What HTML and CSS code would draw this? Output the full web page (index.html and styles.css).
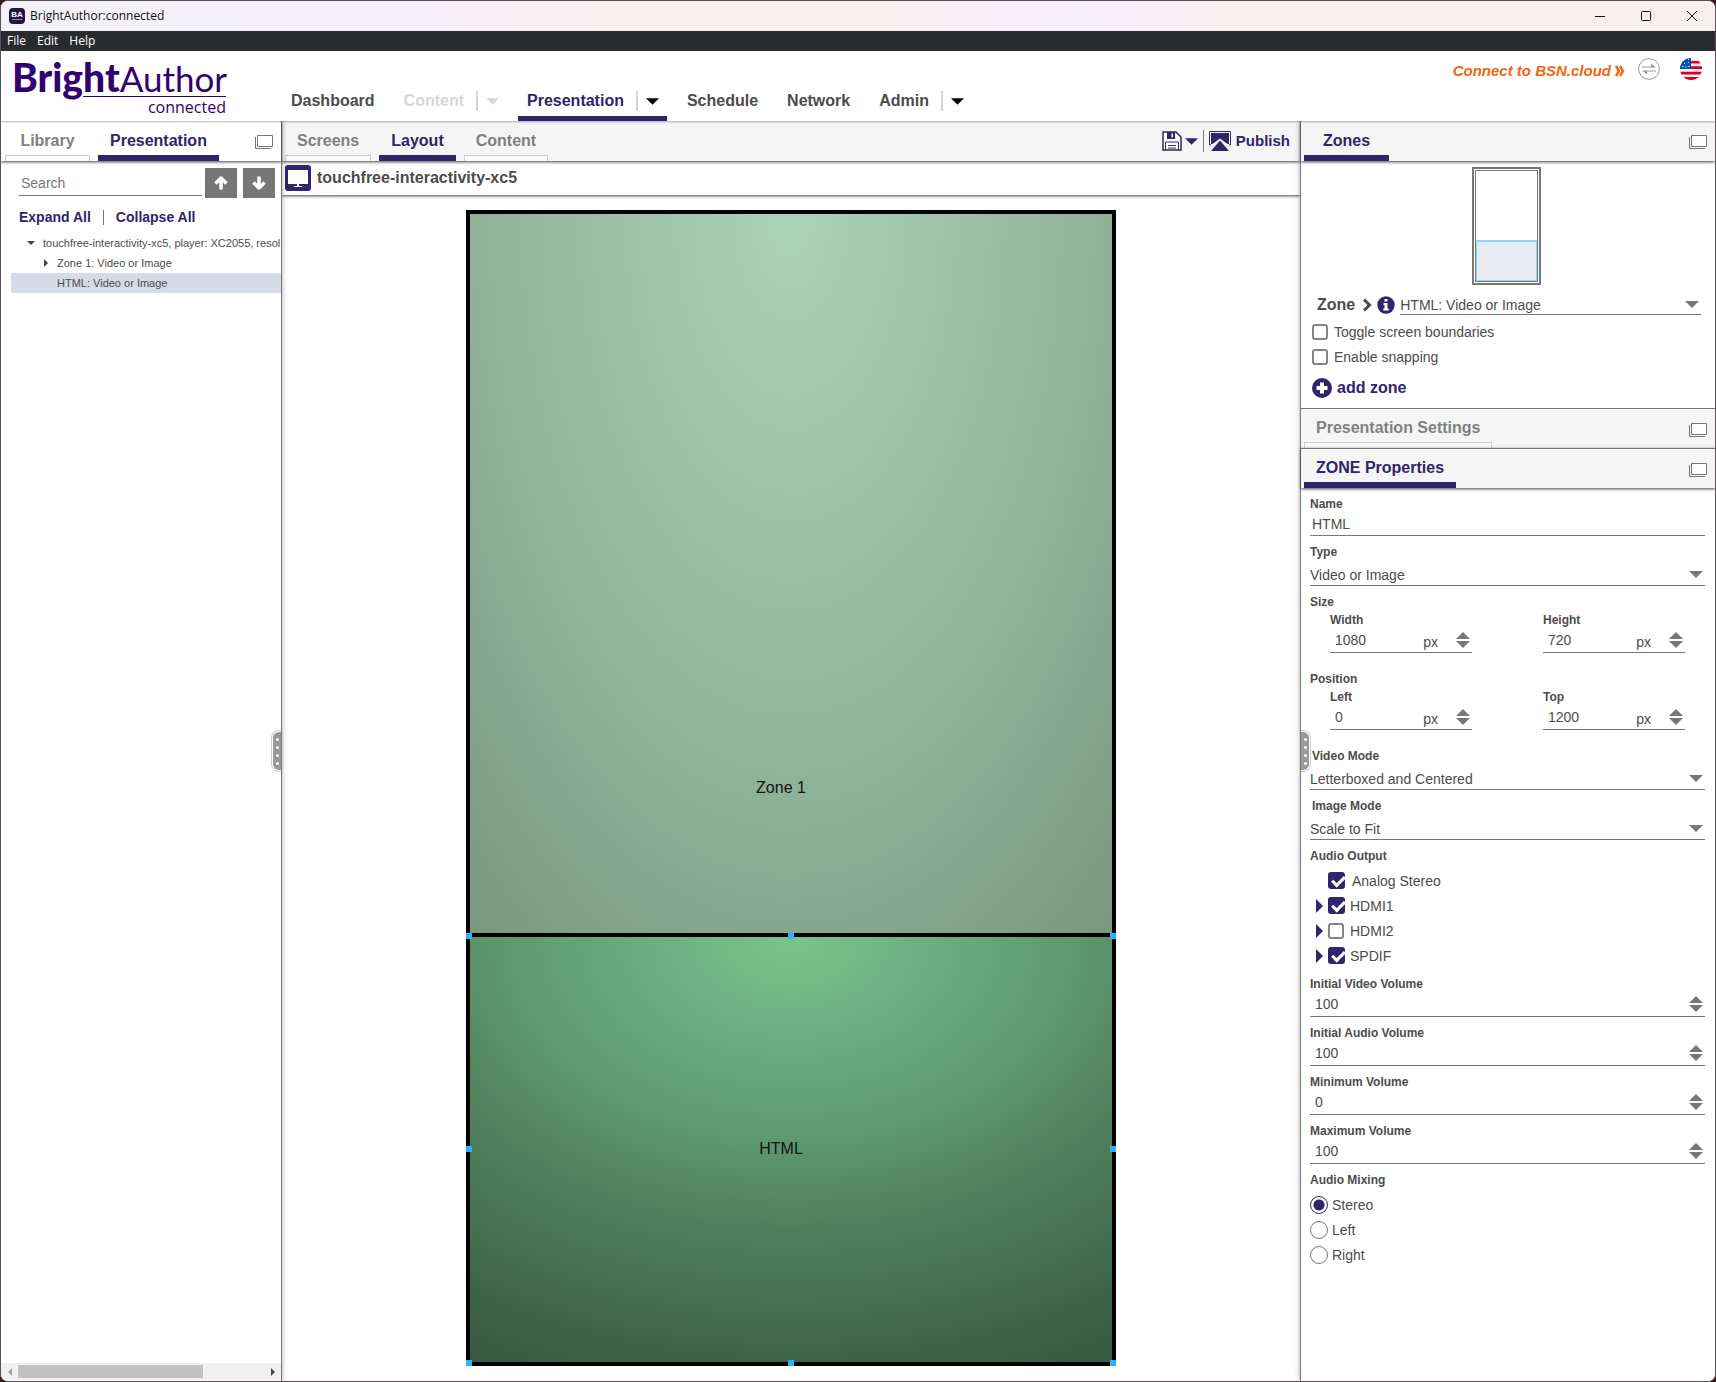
FILE: index.html
```html
<!DOCTYPE html>
<html lang="en">
<head>
<meta charset="utf-8">
<title>BrightAuthor:connected</title>
<link rel="stylesheet" href="styles.css">
</head>
<body>
<svg class="defs" aria-hidden="true">
  <symbol id="i-window" viewBox="0 0 18 14"><path d="M2.5.5h15v11h-15z" fill="#fff" stroke="#777"/><path d="M.5 2v11.500H16" fill="none" stroke="#777"/></symbol>
  <symbol id="i-down" viewBox="0 0 14 7"><path d="M0 0h14L7 7z" fill="currentColor"/></symbol>
  <symbol id="i-up" viewBox="0 0 14 7"><path d="M0 7h14L7 0z" fill="currentColor"/></symbol>
  <symbol id="i-right" viewBox="0 0 7 14"><path d="M0 0v14l7-7z" fill="currentColor"/></symbol>
  <symbol id="i-arrow" viewBox="0 0 16 16"><path d="M8 14.500V4M2.500 8.500 8 3l5.500 5.500" fill="none" stroke="#fff" stroke-width="3.500" stroke-linejoin="round"/></symbol>
</svg>
<div class="window">
  <header class="titlebar">
    <svg class="app-icon" viewBox="0 0 16 16"><rect width="16" height="16" rx="4" fill="#1f1646"/><text x="8" y="9" text-anchor="middle" class="app-icon-text">BA</text><path d="M3 11.500h10" stroke="#8e86b8"/></svg>
    <span class="title">BrightAuthor:connected</span>
    <div class="controls">
      <button aria-label="Minimize"><svg viewBox="0 0 12 12"><path d="M1 6.500h10" stroke="#111"/></svg></button>
      <button aria-label="Maximize"><svg viewBox="0 0 12 12"><rect x="1.500" y="1.500" width="9" height="9" rx="1" fill="none" stroke="#111"/></svg></button>
      <button aria-label="Close"><svg viewBox="0 0 12 12"><path d="M1 1l10 10M11 1 1 11" stroke="#111"/></svg></button>
    </div>
  </header>
  <nav class="menubar"><a href="#">File</a><a href="#">Edit</a><a href="#">Help</a></nav>
  <div class="masthead">
    <a class="logo" href="#"><span class="logo-name"><b>Bright</b><span>Author</span></span><span class="logo-sub">connected</span></a>
    <nav class="nav">
      <div class="nav-item"><a href="#">Dashboard</a></div>
      <div class="nav-item off has-menu"><a href="#">Content</a><button aria-label="Content menu"><svg class="caret"><use href="#i-down"/></svg></button></div>
      <div class="nav-item on has-menu"><a href="#">Presentation</a><button aria-label="Presentation menu"><svg class="caret"><use href="#i-down"/></svg></button></div>
      <div class="nav-item"><a href="#">Schedule</a></div>
      <div class="nav-item"><a href="#">Network</a></div>
      <div class="nav-item has-menu"><a href="#">Admin</a><button aria-label="Admin menu"><svg class="caret"><use href="#i-down"/></svg></button></div>
    </nav>
    <div class="account">
      <a class="connect" href="#">Connect to BSN.cloud<svg width="10" height="12" viewBox="0 0 10 12"><path d="M1 1l3 5-3 5M5 1l3 5-3 5" fill="none" stroke="currentColor" stroke-width="2.500"/></svg></a>
      <svg width="22" height="22" viewBox="0 0 22 22"><circle cx="11" cy="11" r="10.400" fill="#fff" stroke="#999"/><path d="M4 9.500h14l-5-4v3H4zM18 12.500H4l5 4v-3h9z" fill="#999"/></svg>
      <svg width="22" height="22" viewBox="0 0 22 22"><clipPath id="disc"><circle cx="11" cy="11" r="11"/></clipPath><g clip-path="url(#disc)"><path d="M0 0h22v22H0z" fill="#f4f0f1"/><path d="M0 2.900h22v2.700H0zM0 8.300h22V11H0zM0 13.700h22v2.700H0zM0 19.100h22V22H0z" fill="#d80027"/><path d="M0 0h11v11H0z" fill="#0052b4"/><path d="M2 8.500h1.500M5 9h1.500M8 8.500h1.500M4 5.500h1M8 4.500h1M8 1.500h1" stroke="#cfe0f4"/></g></svg>
    </div>
  </div>
  <main class="workspace">
    <aside class="side left">
      <div class="tabs wide plain"><button class="tab">Library</button><button class="tab on">Presentation</button><button class="pop" aria-label="Pop out"><svg><use href="#i-window"/></svg></button></div>
      <div class="search">
        <input type="search" placeholder="Search" aria-label="Search">
        <button aria-label="Previous"><svg><use href="#i-arrow"/></svg></button>
        <button aria-label="Next"><svg class="flip"><use href="#i-arrow"/></svg></button>
      </div>
      <div class="tree-actions"><a href="#">Expand All</a><i></i><a href="#">Collapse All</a></div>
      <ul class="tree">
        <li><svg viewBox="0 0 8 8"><path d="M0 2h8L4 6z"/></svg>touchfree-interactivity-xc5, player: XC2055, resol</li>
        <li class="child"><svg viewBox="0 0 8 8"><path d="M2 0v8l4-4z"/></svg>Zone 1: Video or Image</li>
        <li class="child sel"><svg viewBox="0 0 8 8"></svg>HTML: Video or Image</li>
      </ul>
      <div class="hscroll"><svg class="dim" viewBox="0 0 4 8"><path d="M4 0v8L0 4z"/></svg><div class="track"><div class="thumb"></div></div><svg viewBox="0 0 4 8"><path d="M0 0v8l4-4z"/></svg></div>
      <div class="grip"><i></i><i></i><i></i><i></i></div>
    </aside>
    <section class="center">
      <div class="tabs">
        <button class="tab">Screens</button><button class="tab on">Layout</button><button class="tab">Content</button>
        <div class="tools">
          <button aria-label="Save"><svg width="20" height="20" viewBox="0 0 20 20"><path d="M1 1h13l5 5v13H1z" fill="#fff" stroke="#30246b" stroke-width="1.500"/><path d="M5 1h8v7H5z" fill="#30246b"/><path d="M9.500 2.500H11v4H9.500z" fill="#fff"/><path d="M3.500 19v-8h13v8M6 14.500h8M6 17h8" fill="none" stroke="#30246b"/></svg></button>
          <button class="save-menu" aria-label="Save options"><svg class="caret"><use href="#i-down"/></svg></button>
          <button class="publish"><svg width="22" height="20" viewBox="0 0 22 20"><path d="M2 14H.5V.5h21V14H20" fill="none" stroke="#30246b"/><path d="M2 2h18v11h-1.500L11 7.500 3.500 13H2z" fill="#30246b"/><path d="M2 20 11 9.500 20 20z" fill="#30246b"/></svg>Publish</button>
        </div>
      </div>
      <div class="filebar"><svg width="26" height="26" viewBox="0 0 26 26"><rect width="26" height="26" rx="3" fill="#30246b"/><path d="M3 5h20v14H3z" fill="#fff"/><path d="M12 19h2v2h3v1H9v-1h3z" fill="#fff"/></svg>touchfree-interactivity-xc5</div>
      <div class="stage">
        <div class="canvas">
          <div class="zone zone-1"><span>Zone 1</span></div>
          <div class="zone zone-html"><span>HTML</span>
            <i class="h t l"></i><i class="h t c"></i><i class="h t r"></i><i class="h m l"></i><i class="h m r"></i><i class="h b l"></i><i class="h b c"></i><i class="h b r"></i>
          </div>
        </div>
      </div>
    </section>
    <aside class="side right">
      <div class="tabs wide"><button class="tab on">Zones</button><button class="pop" aria-label="Pop out"><svg><use href="#i-window"/></svg></button></div>
      <div class="zones">
        <div class="thumb-map"><div class="thumb-screen"><div class="thumb-zone"></div></div></div>
        <div class="zone-row"><label for="zone">Zone</label>
          <svg width="10" height="14" viewBox="0 0 10 14"><path d="M2 1.500 7.500 7 2 12.500" fill="none" stroke="#4a4a4a" stroke-width="3"/></svg>
          <svg width="18" height="18" viewBox="0 0 18 18"><circle cx="9" cy="9" r="8.700" fill="#30246b"/><path d="M7.500 3h3v2.500h-3zM6.500 7h4v5.500h1.200V14.500H6.300v-2h1.200V9h-1z" fill="#fff"/></svg>
          <div class="select"><select id="zone"><option>HTML: Video or Image</option></select><svg><use href="#i-down"/></svg></div>
        </div>
        <label class="check"><input type="checkbox">Toggle screen boundaries</label>
        <label class="check"><input type="checkbox">Enable snapping</label>
        <button class="add"><svg width="20" height="20" viewBox="0 0 20 20"><circle cx="10" cy="10" r="10" fill="#30246b"/><path d="M10 4.500v11M4.500 10h11" stroke="#fff" stroke-width="4"/></svg>add zone</button>
      </div>
      <div class="tabs flat"><button class="tab">Presentation Settings</button><button class="pop" aria-label="Pop out"><svg><use href="#i-window"/></svg></button></div>
      <div class="tabs ruled"><button class="tab on">ZONE Properties</button><button class="pop" aria-label="Pop out"><svg><use href="#i-window"/></svg></button></div>
      <form class="props">
        <div class="field"><label for="name">Name</label><input class="name" id="name" value="HTML"></div>
        <div class="field"><label for="type">Type</label><div class="select"><select id="type"><option>Video or Image</option></select><svg><use href="#i-down"/></svg></div></div>
        <fieldset class="dims"><legend>Size</legend>
          <div class="pair">
            <div><label for="w">Width</label><div class="num"><input type="number" id="w" value="1080"><span>px</span><div class="spin"><svg><use href="#i-up"/></svg><svg><use href="#i-down"/></svg></div></div></div>
            <div><label for="ht">Height</label><div class="num"><input type="number" id="ht" value="720"><span>px</span><div class="spin"><svg><use href="#i-up"/></svg><svg><use href="#i-down"/></svg></div></div></div>
          </div>
        </fieldset>
        <fieldset class="dims"><legend>Position</legend>
          <div class="pair">
            <div><label for="x">Left</label><div class="num"><input type="number" id="x" value="0"><span>px</span><div class="spin"><svg><use href="#i-up"/></svg><svg><use href="#i-down"/></svg></div></div></div>
            <div><label for="y">Top</label><div class="num"><input type="number" id="y" value="1200"><span>px</span><div class="spin"><svg><use href="#i-up"/></svg><svg><use href="#i-down"/></svg></div></div></div>
          </div>
        </fieldset>
        <div class="field mode"><label for="vm">Video Mode</label><div class="select"><select id="vm"><option>Letterboxed and Centered</option></select><svg><use href="#i-down"/></svg></div></div>
        <div class="field mode"><label for="im">Image Mode</label><div class="select"><select id="im"><option>Scale to Fit</option></select><svg><use href="#i-down"/></svg></div></div>
        <fieldset class="group audio"><legend>Audio Output</legend>
          <div class="out"><label class="check wide-gap"><input type="checkbox" checked>Analog Stereo</label></div>
          <div class="out"><svg><use href="#i-right"/></svg><label class="check"><input type="checkbox" checked>HDMI1</label></div>
          <div class="out"><svg><use href="#i-right"/></svg><label class="check"><input type="checkbox">HDMI2</label></div>
          <div class="out"><svg><use href="#i-right"/></svg><label class="check"><input type="checkbox" checked>SPDIF</label></div>
        </fieldset>
        <div class="field"><label for="iv">Initial Video Volume</label><div class="num"><input type="number" id="iv" value="100"><div class="spin"><svg><use href="#i-up"/></svg><svg><use href="#i-down"/></svg></div></div></div>
        <div class="field"><label for="ia">Initial Audio Volume</label><div class="num"><input type="number" id="ia" value="100"><div class="spin"><svg><use href="#i-up"/></svg><svg><use href="#i-down"/></svg></div></div></div>
        <div class="field"><label for="mn">Minimum Volume</label><div class="num"><input type="number" id="mn" value="0"><div class="spin"><svg><use href="#i-up"/></svg><svg><use href="#i-down"/></svg></div></div></div>
        <div class="field"><label for="mx">Maximum Volume</label><div class="num"><input type="number" id="mx" value="100"><div class="spin"><svg><use href="#i-up"/></svg><svg><use href="#i-down"/></svg></div></div></div>
        <fieldset class="group"><legend>Audio Mixing</legend>
          <label class="radio"><input type="radio" name="mix" checked>Stereo</label>
          <label class="radio"><input type="radio" name="mix">Left</label>
          <label class="radio"><input type="radio" name="mix">Right</label>
        </fieldset>
      </form>
      <div class="grip"><i></i><i></i><i></i><i></i></div>
    </aside>
  </main>
</div>
</body>
</html>
```
FILE: styles.css
```css
:root { --brand: #30246b; --text: #4c4c4c; --gray: #777; }
* { box-sizing: border-box; }
body { margin: 0; background: #3a1a1e; color: var(--text); font: 14px/16px "Liberation Sans", Arial, sans-serif; }
button { padding: 0; border: 0; background: none; color: inherit; font: inherit; }
a { color: inherit; text-decoration: none; }
svg { display: block; flex: none; }
input, select { margin: 0; color: inherit; font: inherit; }
fieldset { margin: 0; padding: 0; border: 0; min-width: 0; }
legend { padding: 0; }
.defs { position: absolute; width: 0; height: 0; }

.window { display: flex; flex-direction: column; height: 100vh; border: 1px solid #5b5058; border-radius: 8px; overflow: hidden; background: #fff; }
.titlebar { display: flex; flex: none; align-items: center; height: 30px; padding-left: 8px; background: linear-gradient(90deg, #f3f1fa, #f5eff8 24%, #fbeef1 33%, #f9efed 40%, #f9efed 50%, #f9eef7 58%, #f5eff8 63%, #f9edf6 67%, #f8efee 72%); color: #111; }
.app-icon { width: 16px; height: 16px; }
.app-icon-text { font: bold 8px "Liberation Sans", sans-serif; fill: #fff; }
.title { margin-left: 5px; font: 12px/16px "Open Sans", sans-serif; }
.controls { display: flex; margin-left: auto; }
.controls button { display: grid; place-items: center; width: 46px; height: 30px; }
.controls svg { width: 12px; height: 12px; }
.menubar { display: flex; flex: none; gap: 11px; height: 20px; padding-left: 6px; background: #2a2b2f; color: #fff; font: 12px/20px "Open Sans", sans-serif; }

.masthead { position: relative; z-index: 3; display: flex; flex: none; height: 70px; background: #fff; box-shadow: 0 1px 2px rgba(0, 0, 0, .3); }
.logo { display: flex; flex-direction: column; width: 225px; color: #330072; text-align: right; }
.logo-name { display: flex; align-items: baseline; height: 45px; padding-left: 11px; line-height: 52px; }
.logo-name b { font-family: Lato, sans-serif; font-size: 39px; font-weight: 900; }
.logo-name span { font-family: Lato, sans-serif; font-size: 35px; }
.logo-sub { align-self: flex-end; width: 143px; border-top: 1px solid #330072; font: 16px/20px "Open Sans", sans-serif; }
.nav { display: flex; gap: 11px; margin-left: 56px; font-size: 16px; font-weight: bold; }
.nav-item { display: flex; align-items: center; height: 70px; padding: 35px 9px 0; border-bottom: 5px solid transparent; }
.nav-item a { line-height: 20px; }
.nav-item button { display: flex; align-items: center; height: 20px; margin-left: 12px; padding-left: 8px; border-left: 2px solid #d5d5d8; color: #000; }
.has-menu { padding-right: 8px; }
.nav-item.off, .nav-item.off button { color: #d6d6d6; }
.nav-item.on { color: var(--brand); border-color: var(--brand); }
.caret { width: 13px; height: 7px; }
.account { display: flex; gap: 20px; margin-left: auto; padding: 7px 13px 0 0; }
.account svg:last-child { margin-left: 11px; }
.account svg:last-child { margin-left: 0; }
.connect { display: flex; align-items: center; gap: 4px; height: 26px; margin-right: -7px; color: #f26511; font-size: 15px; font-style: italic; font-weight: bold; }

.workspace { display: flex; flex: 1; min-height: 0; }
.side { position: relative; z-index: 2; background: #fff; box-shadow: 0 0 5px rgba(0, 0, 0, .35); }
.left { display: flex; flex-direction: column; width: 281px; border-right: 1px solid #777; }
.right { width: 415px; border-left: 1px solid #777; }
.center { display: flex; flex: 1; flex-direction: column; min-width: 0; }
.tabs { position: relative; z-index: 1; display: flex; flex: none; gap: 8px; height: 40px; padding: 0 3px; background: #f5f5f5; box-shadow: 0 1px 3px rgba(0, 0, 0, .75); }
.tabs.plain { padding-left: 4px; background: #fff; }
.tab { position: relative; padding: 0 12px; color: #808080; font-size: 16px; font-weight: bold; }
.wide .tab { min-width: 85px; }
.tab::after { content: ""; position: absolute; left: 0; right: 0; bottom: 0; height: 5px; border: 1px solid #ccc; border-bottom: 0; background: #fafafa; }
.tab.on { color: var(--brand); }
.tab.on::after { background: var(--brand); border-color: var(--brand); }
.tabs.flat, .tabs.ruled { border-top: 1px solid #777; }
.tabs.flat .tab, .tabs.ruled .tab { padding-bottom: 2px; }
.tabs.flat { box-shadow: none; }
.pop { margin: 2px 5px 0 auto; }
.pop svg { width: 18px; height: 14px; }

.search { display: flex; gap: 6px; padding: 7px 6px 0 18px; }
.search input { flex: 1; min-width: 0; height: 28px; margin-right: -3px; padding: 2px 2px 0; border: 0; border-bottom: 1px solid #777; background: none; outline: 0; appearance: none; }
.search input::placeholder { color: #777; opacity: 1; }
.search button { display: grid; place-items: center; width: 32px; height: 30px; background: #777; }
.search svg { width: 16px; height: 16px; }
.flip { transform: rotate(180deg); }
.tree-actions { display: flex; align-items: center; gap: 12px; margin-top: 11px; padding-left: 18px; color: var(--brand); font-weight: bold; }
.tree-actions i { width: 1px; height: 15px; background: #777; }
.tree { flex: 1; margin: 8px 0 0 10px; padding: 0; overflow: hidden; list-style: none; font-size: 11px; line-height: 20px; white-space: nowrap; }
.tree li { display: flex; align-items: center; gap: 8px; padding-left: 16px; }
.tree .child { gap: 7px; padding-left: 31px; }
.tree .sel { background: #d5dbe7; }
.tree svg, .hscroll svg { width: 8px; height: 8px; fill: #444; }
.hscroll { display: flex; flex: none; align-items: center; gap: 4px; height: 17px; margin-bottom: 1px; padding: 0 4px 0 5px; background: #f0f0f0; }
.hscroll .dim { fill: #a3a3a3; }
.hscroll .track { flex: 1; }
.hscroll .thumb { width: 75%; height: 13px; background: #c1c1c1; }
.grip { position: absolute; top: 50%; z-index: 2; display: flex; flex-direction: column; align-items: center; justify-content: space-around; width: 8px; height: 38px; margin-top: -19px; padding: 3px 0; background: #999; box-shadow: 0 0 0 1px #fff, 0 0 0 2px #ccc; }
.grip i { width: 3px; height: 3px; border-radius: 50%; background: #fff; }
.left .grip { right: 0; border-radius: 6px 0 0 6px; clip-path: inset(-2px 0 -2px -2px); }
.right .grip { left: 0; border-radius: 0 6px 6px 0; clip-path: inset(-2px -2px -2px 0); }

.tools { display: flex; align-items: center; margin-left: auto; padding: 0 7px 0 0; color: var(--brand); }
.save-menu { margin: 0 5px 0 3px; }
.publish { display: flex; align-items: center; gap: 5px; height: 22px; padding-left: 5px; border-left: 1px solid #777; font-size: 15px; font-weight: bold; }
.filebar { position: relative; display: flex; flex: none; align-items: center; gap: 6px; height: 34px; padding-left: 3px; background: #fff; box-shadow: 0 1px 3px rgba(0, 0, 0, .75); font-size: 16px; line-height: 18px; font-weight: bold; }
.stage { display: flex; flex: 1; justify-content: center; min-height: 0; padding: 15px; }
.canvas { position: relative; aspect-ratio: 650 / 1156; color: #111; font-size: 16px; }
.zone { position: absolute; left: 0; right: 0; bottom: 0; display: grid; place-items: center; border: 4px solid #000; }
.zone span { margin-right: 20px; }
.zone-1 { top: 0; background: radial-gradient(ellipse 79% 82% at 50% 0, #abd3b7, #9dc2a8 32%, #8eb097 64%, #86a78f 77%, #7a967e); }
.zone-html { top: 62.5%; background: radial-gradient(ellipse 105% 114% at 50% 0, #7ac388, #70b585 15%, #5c966d 44%, #4f7f5a 61%, #3d6346 88%, #375a40); }
.h { position: absolute; width: 6px; height: 6px; background: #2cb0ff; }
.h.t { top: -4px; } .h.b { bottom: -4px; } .h.m { top: calc(50% - 3px); }
.h.l { left: -4px; } .h.r { right: -4px; } .h.c { left: calc(50% - 3px); }

.zones { display: flex; flex-direction: column; padding: 6px 14px 6px 11px; }
.thumb-map { align-self: center; width: 69px; height: 118px; padding: 1px; border: 2px solid #777; }
.thumb-screen { display: flex; align-items: flex-end; height: 100%; border: 1px solid #777; }
.thumb-zone { width: 100%; height: 37%; border: 1px solid #8fd8fb; border-top-width: 2px; background: #e8ebf2; }
.zone-row { display: flex; align-items: center; gap: 5px; height: 34px; padding: 6px 0 0 5px; }
.zone-row label { margin-right: 2px; font-size: 16px; font-weight: bold; }
.select { display: flex; flex: 1; align-items: center; height: 22px; border-bottom: 1px solid #777; }
.zone-row .select { height: 20px; }
.select select { flex: 1; min-width: 0; height: 20px; margin-right: -14px; padding: 0 14px 0 0; border: 0; background: none; appearance: none; outline: 0; }
.select svg { width: 14px; height: 7px; margin-right: 2px; color: var(--gray); pointer-events: none; }
.check, .radio { display: flex; align-items: center; gap: 6px; height: 25px; }
.check input { width: 16px; height: 16px; border: 2px solid #858585; border-radius: 3px; background: #fff; appearance: none; }
.check input:checked { width: 17px; height: 17px; margin-right: -1px; border-color: var(--brand); background: var(--brand); }
.check input:checked::after { content: ""; display: block; width: 10px; height: 5px; margin: 2px 0 0 2px; border: solid #fff; border-width: 0 0 3px 3px; transform: rotate(-45deg); }
.add { display: flex; align-items: center; align-self: flex-start; gap: 5px; height: 28px; margin-top: 5px; color: var(--brand); font-size: 16px; font-weight: bold; }

.props { display: flex; flex-direction: column; gap: 8px; padding: 8px 10px 0 9px; }
.field label, .props legend, .pair label { display: block; font-size: 12px; line-height: 16px; font-weight: bold; }
.field.mode label { padding-left: 2px; }
.field .select { margin-top: 4px; }
.name { display: block; width: 100%; height: 24px; padding: 0 2px; border: 0; border-bottom: 1px solid #777; outline: 0; }
.dims { margin-bottom: 10px; }
.pair { display: flex; gap: 71px; margin-top: 2px; padding: 0 20px; }
.pair > div { flex: 1; min-width: 0; }
.num { display: flex; align-items: center; height: 25px; border-bottom: 1px solid #777; }
.num input { flex: 1; min-width: 0; padding: 0 0 0 5px; border: 0; background: none; outline: 0; appearance: textfield; }
.num input::-webkit-inner-spin-button { appearance: none; }
.num span { margin: 4px 18px 0 0; }
.spin { display: flex; flex-direction: column; gap: 2px; margin-right: 2px; color: var(--gray); }
.spin svg { width: 14px; height: 7px; }
.group legend { margin-bottom: 4px; }
.out { display: flex; align-items: center; padding-left: 6px; }
.out svg { width: 7px; height: 14px; margin-right: 5px; color: var(--brand); }
.out .check:first-child { margin-left: 12px; }
.wide-gap { gap: 8px; }
.radio { gap: 4px; }
.radio input { width: 18px; height: 18px; border: 1px solid #777; border-radius: 50%; background: #fff; appearance: none; }
.radio input:checked { border-color: var(--brand); background: radial-gradient(circle, var(--brand) 5px, #fff 6px); }
```
